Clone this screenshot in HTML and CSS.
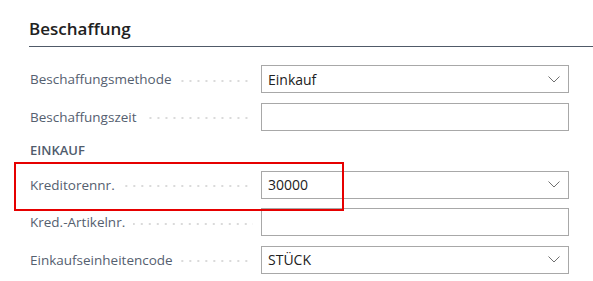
FILE: index.html
```html
<!DOCTYPE html>
<html lang="de">
<head>
    <meta charset="UTF-8">
    <meta name="viewport" content="width=device-width, initial-scale=1.0">
    <title>Beschaffung</title>
    <link rel="stylesheet" href="styles.css">
</head>
<body>
    <section class="group">
        <div class="group-header">
            <h2>Beschaffung</h2>
        </div>

        <div class="fields">
            <div class="field">
                <span class="field-label">Beschaffungsmethode</span>
                <span class="leader"></span>
                <div class="field-input select">
                    <span class="value">Einkauf</span>
                    <svg class="chevron" width="12" height="7" viewBox="0 0 12 7"><polyline points="0.5,0.5 6,6 11.5,0.5"/></svg>
                </div>
            </div>
            <div class="field">
                <span class="field-label">Beschaffungszeit</span>
                <span class="leader"></span>
                <div class="field-input"></div>
            </div>
        </div>

        <h3 class="subgroup">EINKAUF</h3>

        <div class="fields">
            <div class="field marked">
                <span class="field-label">Kreditorennr.</span>
                <span class="leader"></span>
                <div class="field-input select">
                    <span class="value">30000</span>
                    <svg class="chevron" width="12" height="7" viewBox="0 0 12 7"><polyline points="0.5,0.5 6,6 11.5,0.5"/></svg>
                </div>
                <!-- red annotation frame -->
                <span class="highlight"></span>
            </div>
            <div class="field">
                <span class="field-label">Kred.-Artikelnr.</span>
                <span class="leader"></span>
                <div class="field-input"></div>
            </div>
            <div class="field">
                <span class="field-label">Einkaufseinheitencode</span>
                <span class="leader"></span>
                <div class="field-input select">
                    <span class="value">STÜCK</span>
                    <svg class="chevron" width="12" height="7" viewBox="0 0 12 7"><polyline points="0.5,0.5 6,6 11.5,0.5"/></svg>
                </div>
            </div>
        </div>
    </section>
</body>
</html>
```

FILE: styles.css
```css
* {
    box-sizing: border-box;
    margin: 0;
    padding: 0;
}

body {
    font-family: 'Open Sans', 'Noto Sans', sans-serif;
    background-color: #fff;
    width: 593px;
    height: 281px;
    overflow: hidden;
}

.group {
    padding-left: 29px;
}

.group-header {
    height: 47px;
    padding-top: 17px;
    border-bottom: 1px solid #505a68;
}

.group-header h2 {
    font-size: 17px;
    font-weight: 600;
    line-height: 24px;
    color: #212121;
}

.fields {
    display: flex;
    flex-direction: column;
    gap: 9.5px;
    margin-top: 18px;
    padding-right: 24px;
    padding-left: 1px;
}

.subgroup + .fields {
    margin-top: 0;
}

.field {
    display: flex;
    align-items: center;
    height: 28px;
}

.field-label {
    font-size: 13.5px;
    color: #55606f;
    white-space: nowrap;
}

/* dotted leader between label and input */
.leader {
    flex: 1;
    height: 2px;
    margin: 3px 8px 0 8px;
    background-image: linear-gradient(to right, #dadada 2px, transparent 2px);
    background-size: 8px 2px;
    background-repeat: repeat-x;
    background-position: right center;
}

.field-input {
    width: 308px;
    height: 28px;
    border: 1px solid #a8a8a8;
    display: flex;
    align-items: center;
    padding: 0 8px 0 6px;
    font-size: 14px;
    color: #212121;
}

.field-input .value {
    flex: 1;
}

.chevron {
    fill: none;
    stroke: #707070;
    stroke-width: 1;
}

.subgroup {
    height: 40px;
    line-height: 38px;
    padding-left: 1px;
    font-size: 13px;
    font-weight: 600;
    color: #505c6d;
}

.marked {
    position: relative;
}

.highlight {
    position: absolute;
    top: -9px;
    left: -16px;
    width: 330px;
    height: 49px;
    border: 2px solid #e60000;
    pointer-events: none;
}
```
